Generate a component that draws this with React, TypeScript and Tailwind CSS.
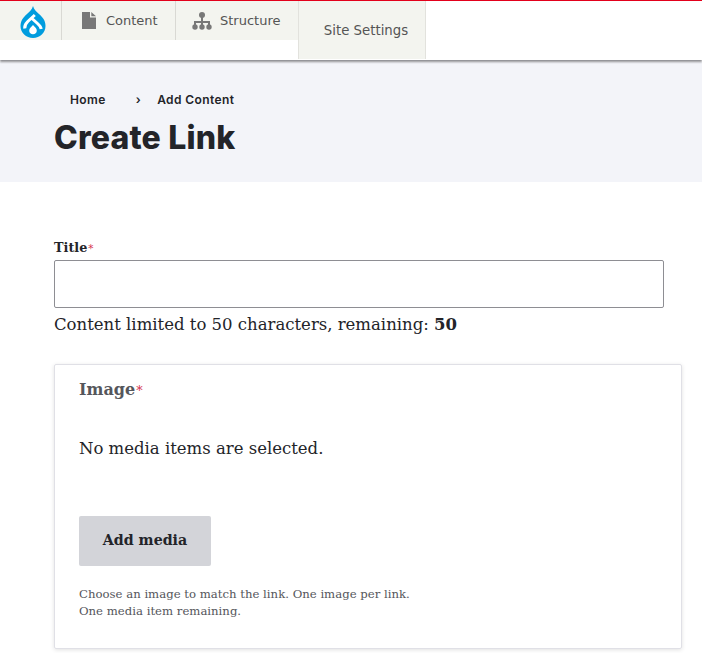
const serif = "font-['DejaVu_Serif',serif]"

function DrupalLogo() {
  return (
    <svg width="26" height="32" viewBox="0 0 26 32">
      <path
        fill="#009cde"
        d="M13 0c1 3.500 3.400 5.600 6 8 3 2.800 6.500 6 6.500 12 0 6.800-5.600 12-12.500 12S.5 26.800.5 20c0-6 3.500-9.200 6.500-12 2.600-2.400 5-4.500 6-8Z"
      />
      <path fill="none" stroke="#fff" strokeWidth="3" d="M4.800 22.500c-.5-3 1-5 3-7l7-6.500M12 12.500l5.500 5c2 1.800 3.500 3.500 3.700 5.500" />
      <path fill="#fff" d="M13 19c-1.900 2-3.800 3.400-3.800 5.700 0 2.100 1.700 3.500 3.800 3.500s3.800-1.400 3.800-3.500c0-2.300-1.900-3.700-3.800-5.700Z" />
    </svg>
  )
}

function FileIcon() {
  return (
    <svg width="14" height="17" viewBox="0 0 14 17" fill="#787878">
      <path d="M0 0h8v5.500h6V17H0Z" />
      <path d="M9.300 0 14 4.300H9.300Z" />
    </svg>
  )
}

function StructureIcon() {
  return (
    <svg width="20" height="18" viewBox="0 0 20 18" fill="#787878">
      <circle cx="10" cy="3" r="3" />
      <rect x="9" y="5" width="2" height="9" />
      <rect x="2" y="9" width="16" height="2" />
      <rect x="2" y="9" width="2" height="5" />
      <rect x="16" y="9" width="2" height="5" />
      <circle cx="3" cy="15" r="2.700" />
      <circle cx="10" cy="15" r="2.700" />
      <circle cx="17" cy="15" r="2.700" />
    </svg>
  )
}

function Required() {
  return <span className="text-[#d6324f] font-normal text-[0.8em] leading-none ml-[1px]">*</span>
}

export default function App() {
  return (
    <div className="h-[653px] overflow-hidden bg-white text-[#232429]">
      {/* toolbar */}
      <header className="h-[60px] border-t border-[#e3001b] bg-white shadow-[0_2px_2px_#8e8e93] relative font-['DejaVu_Sans',sans-serif] text-[13px] text-[#555]">
        <nav className="flex items-start">
          <div className="h-[39px] w-[62px] pl-[20px] pt-[5px] bg-[#f3f4ef] border-r border-[#d9d9d4]">
            <DrupalLogo />
          </div>
          <div className="h-[39px] w-[114px] flex items-center pl-[20px] gap-[10px] bg-[#f3f4ef] border-r border-[#d9d9d4]">
            <FileIcon />
            <span>Content</span>
          </div>
          <div className="h-[39px] w-[122px] flex items-center pl-[16px] gap-[8px] bg-[#f3f4ef]">
            <StructureIcon />
            <span>Structure</span>
          </div>
          <div className="h-[58px] w-[128px] flex items-center justify-center pt-[2px] pl-[8px] text-[13.300px] bg-[#f3f4ef] border-x border-[#e2e2dd]">
            Site Settings
          </div>
        </nav>
      </header>

      {/* page title */}
      <section className="mt-[2px] h-[120px] bg-[#f3f4f9] pl-[54px] font-['Inter',sans-serif]">
        <div className="flex pt-[31px] pl-[16px] text-[12px] font-semibold leading-[14px] tracking-[0.4px]">
          <span>Home</span>
          <span className="ml-[30px]">›</span>
          <span className="ml-[16px]">Add Content</span>
        </div>
        <h1 className="mt-[11px] text-[32px] font-extrabold leading-[40px] tracking-[0.2px]">Create Link</h1>
      </section>

      <main className={`pl-[54px] pr-[20px] pt-[56px] ${serif}`}>
        <label className="block text-[12.800px] font-bold leading-[20px]">
          Title
          <Required />
        </label>
        <input
          type="text"
          className="mt-[2px] block h-[48px] w-[610px] rounded-[2px] border border-[#8e8e93] bg-white"
        />
        <p className="mt-[5px] text-[16.500px] leading-[24px]">
          Content limited to 50 characters, remaining: <strong>50</strong>
        </p>

        <fieldset className="mt-[27px] h-[285px] w-[628px] rounded-[2px] border border-[#e0e0e6] pl-[24px] pt-[13px] shadow-[0_1px_4px_rgba(0,0,0,0.12)]">
          <div className="text-[16px] font-bold leading-[24px] text-[#55565b]">
            Image
            <Required />
          </div>
          <p className="mt-[34px] text-[16.500px] leading-[26px]">No media items are selected.</p>
          <button className="mt-[54px] block h-[50px] w-[132px] rounded-[2px] bg-[#d3d4d9] text-[14.200px] font-bold">
            Add media
          </button>
          <div className="mt-[20px] text-[11.700px] leading-[17px] text-[#55565b]">
            Choose an image to match the link. One image per link.
            <br />
            One media item remaining.
          </div>
        </fieldset>
      </main>
    </div>
  )
}
